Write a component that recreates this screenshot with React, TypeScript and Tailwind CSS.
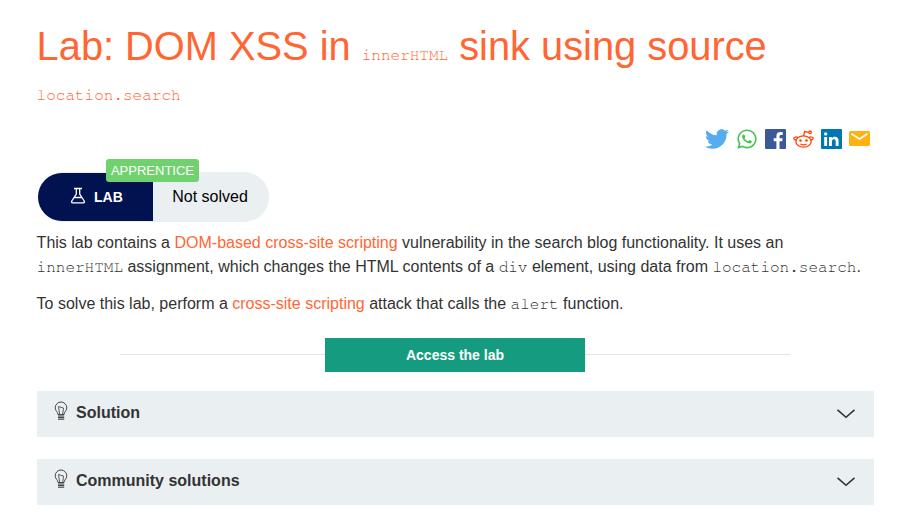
import React from "react";
import { FaTwitter, FaWhatsapp } from "react-icons/fa";

const Code = ({ children }: { children: React.ReactNode }) => (
  <code className="font-['Nimbus_Mono_PS','FreeMono','Liberation_Mono',monospace] text-[16px] leading-none">{children}</code>
);

const Link = ({ children }: { children: React.ReactNode }) => (
  <a href="#" className="text-[#ff6633]">{children}</a>
);

function Bulb() {
  return (
    <svg width="14" height="20" viewBox="0 0 14 20" fill="none" stroke="#333332" strokeWidth="0.9">
      <path d="M4 13.500C4 11 1.200 9.800 1.200 6.900a5.800 5.900 0 0 1 11.600 0c0 2.900-2.800 4.100-2.800 6.600z" />
      <path d="M5.600 13L4.500 5.500l2.500.8 2.500.7L8.700 13" strokeWidth="0.8" />
      <path d="M4 15h6.200M4 16.600h6.200M4 18.200h6.200" strokeWidth="1" />
    </svg>
  );
}

function Panel({ title }: { title: string }) {
  return (
    <button className="mb-[22px] flex h-[46px] w-full items-center bg-[#eaeff2] pl-[17px] pr-[18px] text-left">
      <span className="mb-[6px]"><Bulb /></span>
      <span className="mb-[3px] ml-2 flex-1 text-base font-bold">{title}</span>
      <svg className="mb-px" width="20" height="12" viewBox="0 0 20 12" fill="none" stroke="#333332" strokeWidth="1.6"><path d="M1.500 1.800l8.500 7.500 8.500-7.500" /></svg>
    </button>
  );
}

function Share() {
  return (
    <div className="mr-1 mt-5 flex h-6 items-center justify-end gap-[7px]">
      <FaTwitter size={24} color="#55acee" />
      <FaWhatsapp size={22} color="#43c452" />
      <svg width="21" height="21" viewBox="0 0 21 21"><rect width="21" height="20" rx="1" fill="#3b5998" /><path d="M14.500 20v-7.700h2.700l.4-3h-3.100V7.400c0-.9.300-1.500 1.500-1.500h1.700V3.200c-.3 0-1.300-.1-2.400-.1-2.400 0-3.900 1.400-3.900 4v2.200H8.700v3h2.700V20z" fill="white" /></svg>
      <svg width="21" height="20" viewBox="0 0 21 20" fill="none" stroke="#ff4500" strokeWidth="1.300">
        <ellipse cx="10.500" cy="12.500" rx="7.600" ry="5.700" /><path d="M3.700 10.500C1 12 0 9 1.700 8.300c1.300-.7 2.800 0 3.200.5M17.300 10.500c2.700 1.500 3.700-1.500 2-2.200-1.300-.7-2.800 0-3.200.5M10.500 7l1.200-4.500 4 .9M7.500 15.200q3 1.500 6 0" /><circle cx="17" cy="3.300" r="1.300" /><g fill="#ff4500" stroke="none"><circle cx="7.500" cy="11.500" r="1.300" /><circle cx="13.500" cy="11.500" r="1.300" /></g>
      </svg>
      <svg width="21" height="21" viewBox="0 0 21 21"><rect width="21" height="20" rx="1" fill="#0077b5" /><path d="M3.200 8h2.900v9H3.200zM8 8h2.800v1.200c.5-.9 1.500-1.500 2.900-1.500 2.900 0 3.900 1.700 3.900 4.500V17h-2.900v-4.500c0-1.300-.2-2.300-1.700-2.300-1.600 0-2.100 1-2.100 2.300V17H8z" fill="white" /><circle cx="4.650" cy="4.900" r="1.700" fill="white" /></svg>
      <svg className="mb-px" width="21" height="15" viewBox="0 0 21 15"><rect width="21" height="15" rx="1.500" fill="#ffb111" /><path d="M2.500 2.700l8 5.200 8-5.200" fill="none" stroke="white" strokeWidth="1.700" /></svg>
    </div>
  );
}

export default function App() {
  return (
    <main className="h-[528px] w-[897px] overflow-hidden bg-white pl-[37px] pr-[23px] pt-[22px] font-['Liberation_Sans',sans-serif] text-base leading-6 text-[#333332]">
      <h1 className="-ml-[0.4px] text-[39.8px] leading-[49px] text-[#ff6633]">
        <span className="block h-[49px] whitespace-nowrap">Lab: DOM XSS in <Code>innerHTML</Code> sink using source</span>
        <span className="flex h-9 items-center pt-[12px]"><Code>location.search</Code></span>
      </h1>
      <Share />
      <div className="relative ml-px mt-[21px] flex h-[50px] w-[231px] items-center overflow-visible rounded-full bg-[#eaeff2] text-black">
        <div className="flex h-12 w-[115px] items-center rounded-l-full bg-[#00124f] pl-8 text-white">
          <svg width="16" height="17" viewBox="0 0 16 17" fill="none" stroke="white" strokeWidth="1.300" className="mb-1"><path d="M4 1.500h8M6.300 1.500V7l-4.500 7q-.8 1.800 1 1.800h10.400q1.800 0 1-1.800L9.700 7V1.500M4.500 10.500h7" /></svg>
          <b className="ml-2 text-sm">LAB</b>
        </div>
        <span className="ml-[19.2px]">Not solved</span>
        <span className="absolute left-[68px] top-[-13px] h-[23px] w-[93px] rounded-[3px] bg-[#6fd26f] text-center text-[13px] leading-[23px] text-white">APPRENTICE</span>
      </div>
      <p className="-ml-[0.4px] mt-[9px] whitespace-nowrap">This lab contains a <Link>DOM-based cross-site scripting</Link> vulnerability in the search blog functionality. It uses an<br /><Code>innerHTML</Code> assignment, which changes the HTML contents of a <Code>div</Code> element, using data from <Code>location.search</Code>.</p>
      <p className="-ml-[0.4px] mt-[13px]">To solve this lab, perform a <Link>cross-site scripting</Link> attack that calls the <Code>alert</Code> function.</p>
      <div className="mt-[22px] flex items-center pl-[83px] pr-[84px]">
        <div className="mb-px h-px flex-1 bg-[#e4e4e4]" />
        <button className="h-[34px] w-[260px] bg-[#159c80] text-sm font-bold text-white">Access the lab</button>
        <div className="mb-px h-px flex-1 bg-[#e4e4e4]" />
      </div>
      <div className="mt-[19px]"><Panel title="Solution" /><Panel title="Community solutions" /></div>
    </main>
  );
}
